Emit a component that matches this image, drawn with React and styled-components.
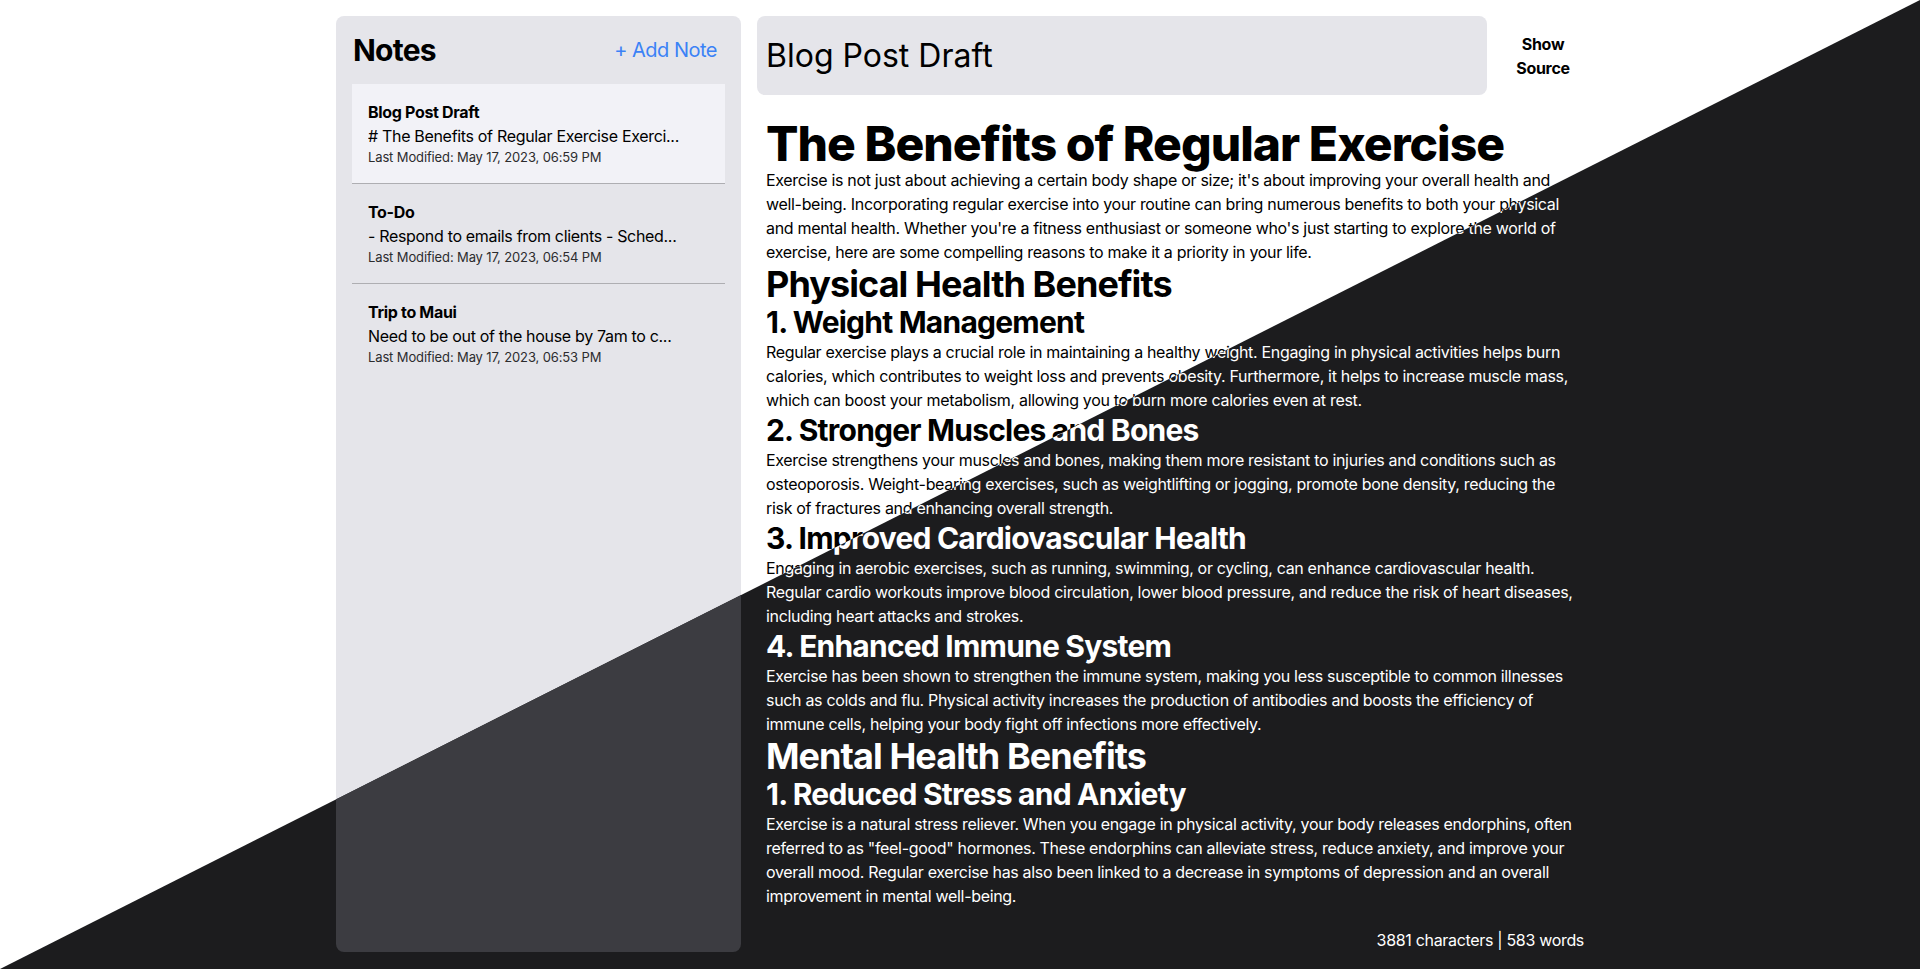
import React from 'react';
import styled, { createGlobalStyle, css, ThemeProvider } from 'styled-components';

const lightTheme = {
  bg: '#ffffff',
  panel: '#e5e5ea',
  selected: '#f2f2f7',
  divider: '#aeaeb2',
  text: '#000000',
  muted: '#2c2c2e',
  accent: '#3b82f6',
};

const darkTheme = {
  bg: '#1c1c1e',
  panel: '#3c3c41',
  selected: '#48484a',
  divider: '#636366',
  text: '#ffffff',
  muted: '#d1d1d6',
  accent: '#0a84ff',
};

const GlobalStyle = createGlobalStyle`
  html, body {
    margin: 0;
    padding: 0;
    overflow: hidden;
  }
  body {
    font-family: Inter, "Noto Sans", sans-serif;
    letter-spacing: -0.02em;
    -webkit-font-smoothing: antialiased;
  }
  * {
    box-sizing: border-box;
  }
`;

const Screen = styled.div`
  position: relative;
  width: 100%;
  height: 100vh;
  overflow: hidden;
`;

// the dark copy sits on top and only shows in the lower-right triangle
const Layer = styled.div`
  height: 100vh;
  padding: 16px 0 17px;
  background-color: ${({ theme }) => theme.bg};
  color: ${({ theme }) => theme.text};

  ${({ $clipped }) =>
    $clipped &&
    css`
      position: absolute;
      inset: 0;
      clip-path: polygon(100% 0, 100% 100%, 0 100%);
    `}
`;

const Frame = styled.div`
  max-width: 1248px;
  height: 100%;
  margin: 0 auto;
  display: flex;
  gap: 16px;
`;

const Sidebar = styled.aside`
  width: 405px;
  flex-shrink: 0;
  display: flex;
  flex-direction: column;
  background-color: ${({ theme }) => theme.panel};
  border-radius: 8px;
`;

const SidebarHeader = styled.div`
  display: flex;
  justify-content: space-between;
  align-items: center;
  padding: 16px 16px 16px 17px;
`;

const SidebarTitle = styled.h1`
  margin: 0;
  font-size: 30px;
  line-height: 36px;
  font-weight: 700;
  letter-spacing: -0.025em;
`;

const AddButton = styled.button`
  padding: 0 8px;
  border: none;
  background: none;
  font-family: inherit;
  font-size: 20px;
  line-height: 28px;
  letter-spacing: -0.025em;
  color: ${({ theme }) => theme.accent};
  cursor: pointer;
`;

const NoteList = styled.div`
  padding: 0 16px;
`;

const NoteItem = styled.div`
  padding: 16px;
  background-color: ${({ $active, theme }) => ($active ? theme.selected : 'transparent')};
  border-bottom: 1px solid ${({ theme }) => theme.divider};
  cursor: pointer;

  &:last-child {
    border-bottom: none;
  }
`;

const NoteTitle = styled.div`
  font-size: 16px;
  line-height: 24px;
  font-weight: 700;
`;

const NotePreview = styled.div`
  font-size: 16px;
  line-height: 24px;
  white-space: nowrap;
  overflow: hidden;
`;

const NoteDate = styled.div`
  font-size: 13px;
  line-height: 19px;
  letter-spacing: -0.01em;
  color: ${({ theme }) => theme.muted};
`;

const Main = styled.main`
  flex: 1;
  min-width: 0;
  display: flex;
  flex-direction: column;
`;

const EditorHeader = styled.div`
  display: flex;
  align-items: center;
  gap: 15px;
`;

const TitleInput = styled.input`
  flex: 1;
  min-width: 0;
  height: 79px;
  padding: 0 9px;
  border: none;
  border-radius: 8px;
  outline: none;
  background-color: ${({ theme }) => theme.panel};
  color: ${({ theme }) => theme.text};
  font-family: inherit;
  font-size: 32px;
  letter-spacing: 0;
`;

const SourceButton = styled.button`
  width: 82px;
  padding: 0 8px;
  border: none;
  background: none;
  color: ${({ theme }) => theme.text};
  font-family: inherit;
  font-size: 16px;
  line-height: 24px;
  font-weight: 700;
  letter-spacing: -0.02em;
  text-align: center;
  cursor: pointer;
`;

const Preview = styled.article`
  flex: 1;
  min-height: 0;
  overflow: hidden;
  margin-top: 25px;
  padding: 0 9px;
`;

const H1 = styled.h1`
  margin: 0;
  font-size: 48px;
  line-height: 48px;
  font-weight: 800;
  letter-spacing: -0.02em;
`;

const H2 = styled.h2`
  margin: 0;
  font-size: 36px;
  line-height: 40px;
  font-weight: 700;
  letter-spacing: -0.026em;
`;

const H3 = styled.h3`
  margin: 0;
  font-size: 30px;
  line-height: 36px;
  font-weight: 700;
  letter-spacing: -0.026em;
`;

const P = styled.p`
  margin: 0;
  font-size: 16px;
  line-height: 24px;
`;

const WordCount = styled.div`
  font-size: 16px;
  line-height: 24px;
  text-align: right;
`;

const notes = [
  {
    id: 1,
    title: 'Blog Post Draft',
    preview: '# The Benefits of Regular Exercise Exerci...',
    modified: 'May 17, 2023, 06:59 PM',
  },
  {
    id: 2,
    title: 'To-Do',
    preview: '- Respond to emails from clients - Sched...',
    modified: 'May 17, 2023, 06:54 PM',
  },
  {
    id: 3,
    title: 'Trip to Maui',
    preview: 'Need to be out of the house by 7am to c...',
    modified: 'May 17, 2023, 06:53 PM',
  },
];

const NotesApp = ({ clipped }) => (
  <Layer $clipped={clipped}>
    <Frame>
      <Sidebar>
        <SidebarHeader>
          <SidebarTitle>Notes</SidebarTitle>
          <AddButton>+ Add Note</AddButton>
        </SidebarHeader>
        <NoteList>
          {notes.map((note) => (
            <NoteItem key={note.id} $active={note.id === 1}>
              <NoteTitle>{note.title}</NoteTitle>
              <NotePreview>{note.preview}</NotePreview>
              <NoteDate>Last Modified: {note.modified}</NoteDate>
            </NoteItem>
          ))}
        </NoteList>
      </Sidebar>
      <Main>
        <EditorHeader>
          <TitleInput defaultValue="Blog Post Draft" />
          <SourceButton>Show Source</SourceButton>
        </EditorHeader>
        <Preview>
          <H1>The Benefits of Regular Exercise</H1>
          <P>
            Exercise is not just about achieving a certain body shape or size; it's about improving your overall
            health and well-being. Incorporating regular exercise into your routine can bring numerous benefits to
            both your physical and mental health. Whether you're a fitness enthusiast or someone who's just starting
            to explore the world of exercise, here are some compelling reasons to make it a priority in your life.
          </P>
          <H2>Physical Health Benefits</H2>
          <H3>1. Weight Management</H3>
          <P>
            Regular exercise plays a crucial role in maintaining a healthy weight. Engaging in physical activities
            helps burn calories, which contributes to weight loss and prevents obesity. Furthermore, it helps to
            increase muscle mass, which can boost your metabolism, allowing you to burn more calories even at rest.
          </P>
          <H3>2. Stronger Muscles and Bones</H3>
          <P>
            Exercise strengthens your muscles and bones, making them more resistant to injuries and conditions such
            as osteoporosis. Weight-bearing exercises, such as weightlifting or jogging, promote bone density,
            reducing the risk of fractures and enhancing overall strength.
          </P>
          <H3>3. Improved Cardiovascular Health</H3>
          <P>
            Engaging in aerobic exercises, such as running, swimming, or cycling, can enhance cardiovascular health.
            Regular cardio workouts improve blood circulation, lower blood pressure, and reduce the risk of heart
            diseases, including heart attacks and strokes.
          </P>
          <H3>4. Enhanced Immune System</H3>
          <P>
            Exercise has been shown to strengthen the immune system, making you less susceptible to common illnesses
            such as colds and flu. Physical activity increases the production of antibodies and boosts the efficiency
            of immune cells, helping your body fight off infections more effectively.
          </P>
          <H2>Mental Health Benefits</H2>
          <H3>1. Reduced Stress and Anxiety</H3>
          <P>
            Exercise is a natural stress reliever. When you engage in physical activity, your body releases
            endorphins, often referred to as "feel-good" hormones. These endorphins can alleviate stress, reduce
            anxiety, and improve your overall mood. Regular exercise has also been linked to a decrease in symptoms
            of depression and an overall improvement in mental well-being.
          </P>
        </Preview>
        <WordCount>3881 characters | 583 words</WordCount>
      </Main>
    </Frame>
  </Layer>
);

const App = () => (
  <>
    <GlobalStyle />
    <Screen>
      <ThemeProvider theme={lightTheme}>
        <NotesApp />
      </ThemeProvider>
      <ThemeProvider theme={darkTheme}>
        <NotesApp clipped />
      </ThemeProvider>
    </Screen>
  </>
);

export default App;
